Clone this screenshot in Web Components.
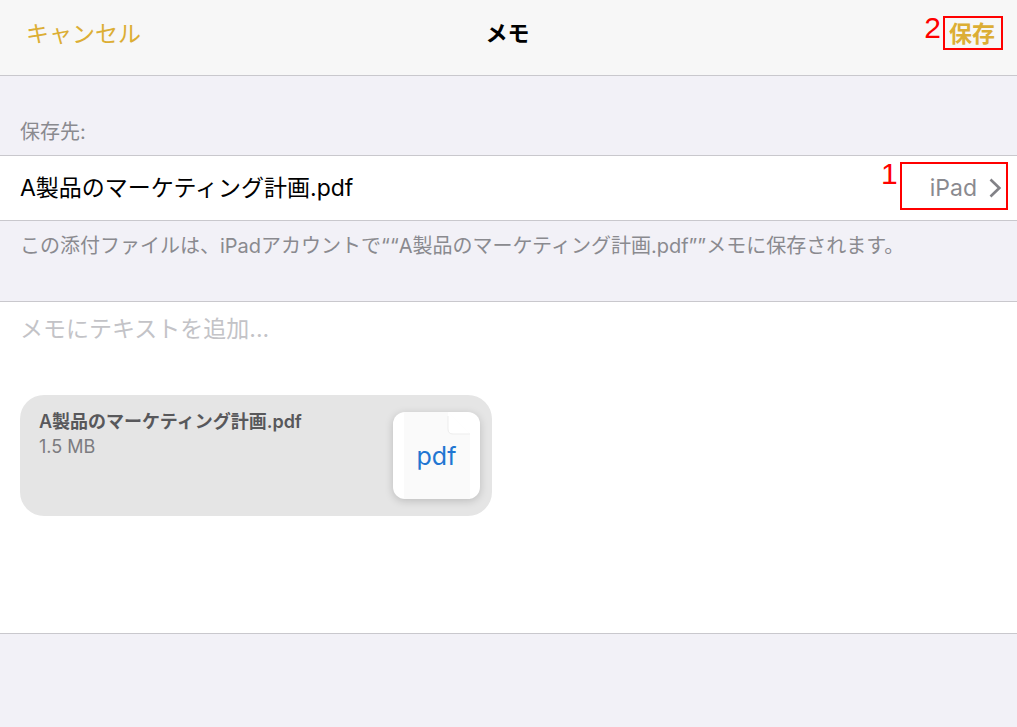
<!DOCTYPE html>
<html lang="ja">
<head>
<meta charset="utf-8">
<meta name="viewport" content="width=device-width, initial-scale=1">
<title>メモ</title>
<style>
  html, body { margin: 0; min-height: 100%; background: #f2f1f7; }
  body {
    --line: #c9c8cd;
    --accent: #dcae34;
    --muted: #8a8a8f;
    font-family: Inter, "Noto Sans CJK JP", sans-serif;
    font-size: 23px;
    line-height: 34px;
    color: #000;
  }
</style>
</head>
<body>
<save-sheet></save-sheet>
<script>
const define = (name, html, setup) => customElements.define(name, class extends HTMLElement {
  constructor() {
    super();
    this.attachShadow({ mode: 'open' }).innerHTML = html;
  }
  connectedCallback() { if (setup) setup(this, this.shadowRoot); }
});

define('step-mark', `
  <style>
    :host { display: block; position: relative; color: #f00; border: 2px solid #f00; }
    .number {
      position: absolute; right: 100%; top: -7px; margin-right: 4px;
      font: 30px/34px "Liberation Sans", Arial, sans-serif;
    }
  </style>
  <slot></slot><span class="number"></span>`,
  (host, root) => { root.querySelector('.number').textContent = host.getAttribute('step'); });

define('nav-bar', `
  <style>
    :host {
      display: grid; grid-template-columns: 1fr auto 1fr; align-items: center;
      padding: 16px 14px 25px; background: #f7f7f7; border-bottom: 1px solid var(--line);
    }
    h1 { margin: 0; padding-right: 2px; font-size: 22px; line-height: 34px; font-weight: 700; }
    .start { padding-left: 12px; }
    .end { justify-self: end; }
  </style>
  <div class="start"><slot name="start"></slot></div>
  <h1><slot></slot></h1>
  <div class="end"><slot name="end"></slot></div>`);

define('text-button', `
  <style>
    :host { display: block; }
    button {
      display: block; margin: 0; padding: 2px 0 0; border: 0; background: none; cursor: pointer;
      font: inherit; line-height: 32px; color: var(--accent);
    }
    :host([strong]) button { font-weight: 700; padding: 2px 6px 0 4px; line-height: 28px; }
  </style>
  <button type="button"><slot></slot></button>`);

define('list-section', `
  <style>
    :host { display: block; color: var(--muted); font-size: 20px; line-height: 30px; }
    h2 { margin: 0; padding: 41px 20px 8px; font: inherit; }
    p { margin: 0; padding: 10px 20px 40px; }
  </style>
  <h2><slot name="heading"></slot></h2>
  <slot></slot>
  <p><slot name="note"></slot></p>`);

define('list-row', `
  <style>
    :host {
      display: flex; justify-content: space-between; align-items: center;
      padding: 6px 9px 10px 20px; background: #fff; color: #000;
      border: solid var(--line); border-width: 1px 0; font-size: 23px;
    }
    .label { padding-top: 4px; }
  </style>
  <div class="label"><slot></slot></div>
  <slot name="value"></slot>`);

define('account-picker', `
  <style>
    :host { display: block; }
    button {
      display: flex; align-items: center; gap: 12px; margin: 0; padding: 4px 5px 0 28px;
      height: 44px; border: 0; background: none; cursor: pointer;
      font: inherit; font-size: 23px; color: var(--muted);
    }
    svg { display: block; width: 12px; height: 20px; }
  </style>
  <button type="button"><slot></slot>
    <svg viewBox="0 0 12 20" fill="none" stroke="#828287" stroke-width="2.6" aria-hidden="true"><path d="M1.5 1.5 10.3 10 1.5 18.5"/></svg>
  </button>`);

define('memo-editor', `
  <style>
    :host { display: block; background: #fff; border: solid var(--line); border-width: 1px 0; padding: 10px 20px 117px; }
    textarea {
      display: block; width: 100%; height: 83px; box-sizing: border-box; margin: 0; padding: 0;
      border: 0; outline: 0; resize: none; background: none; font: inherit; color: #000;
    }
    textarea::placeholder { color: #c3c3c7; opacity: 1; }
  </style>
  <textarea aria-label="メモ" placeholder="メモにテキストを追加..."></textarea>
  <slot></slot>`);

define('file-card', `
  <style>
    :host {
      display: flex; justify-content: space-between; box-sizing: border-box;
      width: 100%; max-width: 472px; padding: 14px 12px 17px 19px;
      background: #e5e5e5; border-radius: 24px;
    }
    .name, .size { font-size: 18px; line-height: 25px; }
    .name { font-weight: 600; color: #58585b; }
    .size { color: #7c7c80; }
  </style>
  <div class="text">
    <div class="name"><slot></slot></div>
    <div class="size"><slot name="size"></slot></div>
  </div>
  <file-thumb>pdf</file-thumb>`);

define('file-thumb', `
  <style>
    :host {
      display: grid; place-items: center; width: 87px; height: 87px; margin-top: 3px;
      border-radius: 12px; background: #fff; box-shadow: 0 2px 9px rgba(0,0,0,.18);
      color: #2176d2; font-size: 25px; line-height: 34px;
    }
    svg, span { grid-area: 1 / 1; }
    svg { display: block; width: 87px; height: 87px; }
  </style>
  <svg viewBox="0 0 87 87" aria-hidden="true">
    <path d="M11 0H55L77 22V87H11Z" fill="#fafafa"/>
    <path d="M55 0 77 22H60Q55 22 55 17Z" fill="#fff"/>
    <path d="M55 4V17Q55 22 60 22H77" fill="none" stroke="#ededed"/>
  </svg>
  <span><slot></slot></span>`);

define('save-sheet', `
  <style>:host { display: block; }</style>
  <nav-bar>
    <text-button slot="start">キャンセル</text-button>
    メモ
    <step-mark slot="end" step="2"><text-button strong>保存</text-button></step-mark>
  </nav-bar>
  <main>
    <list-section>
      <span slot="heading">保存先:</span>
      <list-row>A製品のマーケティング計画.pdf
        <step-mark slot="value" step="1"><account-picker>iPad</account-picker></step-mark>
      </list-row>
      <span slot="note">この添付ファイルは、iPadアカウントで““A製品のマーケティング計画.pdf””メモに保存されます。</span>
    </list-section>
    <memo-editor>
      <file-card>A製品のマーケティング計画.pdf<span slot="size">1.5 MB</span></file-card>
    </memo-editor>
  </main>`);
</script>
</body>
</html>
